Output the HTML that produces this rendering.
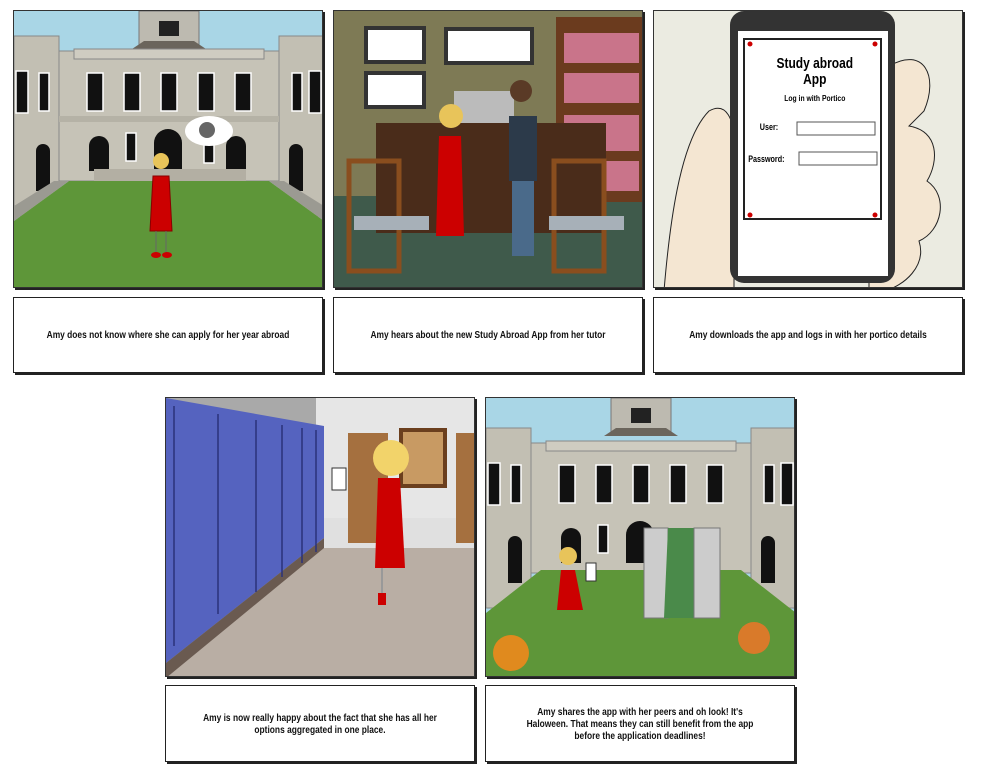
<!DOCTYPE html>
<html><head><meta charset="utf-8"><style>
body{margin:0;width:988px;height:778px;background:#fff;position:relative;overflow:hidden;font-family:"Liberation Sans",sans-serif}
.p{position:absolute;width:310px;height:278px;overflow:hidden;box-shadow:2px 2px 0 #222;border:1px solid #333;box-sizing:border-box}
.c{position:absolute;width:310px;height:76px;border:1.5px solid #222;box-shadow:2px 2px 0 #222;box-sizing:border-box;background:#fff;display:flex;align-items:center;justify-content:center;text-align:center;overflow:hidden}
.c span{display:inline-block;flex:none;width:340px;transform:scaleX(.8);font-weight:bold;font-size:10.5px;line-height:12px;color:#111}
.c span.n{width:300px}
svg{display:block}
</style></head><body>

<div class="p" style="left:13px;top:10px">
<svg width="310" height="278" viewBox="0 0 310 278">
<rect width="310" height="278" fill="#a9d6e6"/>
<rect x="125" y="0" width="60" height="35" fill="#bdbab0" stroke="#777"/>
<rect x="145" y="10" width="20" height="15" fill="#222"/>
<polygon points="118,38 192,38 180,30 130,30" fill="#6b655c"/>
<rect x="0" y="25" width="45" height="180" fill="#c2bfb3" stroke="#888"/>
<rect x="265" y="25" width="45" height="180" fill="#c2bfb3" stroke="#888"/>
<rect x="45" y="40" width="220" height="130" fill="#c6c3b7" stroke="#888"/>
<rect x="60" y="38" width="190" height="10" fill="#cfccc1" stroke="#888"/>
<rect x="45" y="105" width="220" height="6" fill="#b5b2a6"/>
<g fill="#111" stroke="#fff" stroke-width="1.5">
<rect x="73" y="62" width="16" height="38"/><rect x="110" y="62" width="16" height="38"/><rect x="147" y="62" width="16" height="38"/><rect x="184" y="62" width="16" height="38"/><rect x="221" y="62" width="16" height="38"/>
<rect x="2" y="60" width="12" height="42"/><rect x="25" y="62" width="10" height="38"/><rect x="278" y="62" width="10" height="38"/><rect x="295" y="60" width="12" height="42"/>
<rect x="112" y="122" width="10" height="28"/><rect x="190" y="130" width="10" height="22"/>
</g>
<g fill="#111"><path d="M75 160v-25a10 10 0 0 1 20 0v25z"/><path d="M140 160v-28a14 14 0 0 1 28 0v28z"/><path d="M212 160v-25a10 10 0 0 1 20 0v25z"/><path d="M22 180v-40a7 7 0 0 1 14 0v40z"/><path d="M275 180v-40a7 7 0 0 1 14 0v40z"/></g>
<rect x="80" y="158" width="152" height="14" fill="#b3afa3"/>
<polygon points="0,210 55,170 255,170 310,210 310,278 0,278" fill="#5e9639"/>
<polygon points="0,210 55,170 40,170 0,195" fill="#9b9a92"/>
<polygon points="310,210 255,170 270,170 310,195" fill="#9b9a92"/>
<ellipse cx="195" cy="120" rx="24" ry="15" fill="#fff"/><circle cx="193" cy="119" r="8" fill="#666"/>
<circle cx="147" cy="150" r="8" fill="#e8c45a"/>
<path d="M139 165h16l3 55h-22z" fill="#c00" stroke="#800"/>
<path d="M142 220v22M152 220v22" stroke="#666"/>
<ellipse cx="142" cy="244" rx="5" ry="3" fill="#c00"/><ellipse cx="153" cy="244" rx="5" ry="3" fill="#c00"/>
</svg></div>

<div class="p" style="left:333px;top:10px">
<svg width="310" height="278" viewBox="0 0 310 278">
<rect width="310" height="278" fill="#7e7a55"/>
<rect x="0" y="185" width="310" height="93" fill="#3f5a4b"/>
<rect x="32" y="17" width="58" height="34" fill="#fff" stroke="#333" stroke-width="4"/>
<rect x="32" y="62" width="58" height="34" fill="#fff" stroke="#333" stroke-width="4"/>
<rect x="112" y="18" width="86" height="34" fill="#fff" stroke="#333" stroke-width="4"/>
<rect x="222" y="6" width="88" height="185" fill="#6b3b1e"/>
<g fill="#c9748a"><rect x="230" y="22" width="75" height="30"/><rect x="230" y="62" width="75" height="30"/><rect x="230" y="104" width="75" height="36"/><rect x="230" y="150" width="75" height="30"/></g>
<rect x="42" y="112" width="230" height="110" fill="#4a2c1a"/>
<rect x="120" y="80" width="60" height="32" fill="#bbb"/>
<rect x="15" y="150" width="50" height="110" fill="none" stroke="#8a4e1e" stroke-width="5"/>
<rect x="220" y="150" width="50" height="110" fill="none" stroke="#8a4e1e" stroke-width="5"/>
<rect x="20" y="205" width="75" height="14" fill="#a7b0b8"/><rect x="215" y="205" width="75" height="14" fill="#a7b0b8"/>
<circle cx="117" cy="105" r="12" fill="#e8c45a"/>
<path d="M105 125h22l3 100h-28z" fill="#c00"/>
<circle cx="187" cy="80" r="11" fill="#5a3a26"/>
<path d="M175 105h28v65h-28z" fill="#2c3a4a"/><path d="M178 170h22v75h-22z" fill="#4a6a8a"/>
</svg></div>

<div class="p" style="left:653px;top:10px">
<svg width="310" height="278" viewBox="0 0 310 278">
<rect width="310" height="278" fill="#ebebe1"/>
<path d="M55 100c18-10 25 10 25 30v150h-70c5-60 15-150 45-180z" fill="#f4e6d2" stroke="#222"/>
<path d="M235 55c35-20 50 10 35 45l-15 15c30 5 30 35 18 55 22 15 15 50-8 60 8 25-15 45-35 50h-15v-225z" fill="#f4e6d2" stroke="#222"/>
<rect x="76" y="0" width="165" height="272" rx="14" fill="#333"/>
<rect x="84" y="20" width="150" height="245" fill="#fff"/>
<rect x="90" y="28" width="137" height="180" fill="#fff" stroke="#222" stroke-width="2"/>
<g fill="#c00"><circle cx="96" cy="33" r="2.5"/><circle cx="221" cy="33" r="2.5"/><circle cx="96" cy="204" r="2.5"/><circle cx="221" cy="204" r="2.5"/></g>
<g font-family="Liberation Sans,sans-serif" font-weight="bold">
<text x="161" y="57" text-anchor="middle" font-size="15" transform="translate(32 0) scale(.8 1)">Study abroad</text>
<text x="161" y="73" text-anchor="middle" font-size="15" transform="translate(32 0) scale(.8 1)">App</text>
<text x="161" y="90" text-anchor="middle" font-size="8.5" transform="translate(32 0) scale(.8 1)">Log in with Portico</text>
<text x="106" y="119" font-size="9" transform="translate(21 0) scale(.8 1)">User:</text>
<text x="94" y="151" font-size="9" transform="translate(19 0) scale(.8 1)">Password:</text>
</g>
<rect x="143" y="111" width="78" height="13" fill="#fff" stroke="#555"/>
<rect x="145" y="141" width="78" height="13" fill="#fff" stroke="#555"/>
</svg></div>

<div class="c" style="left:13px;top:297px"><span>Amy does not know where she can apply for her year abroad</span></div>
<div class="c" style="left:333px;top:297px"><span>Amy hears about the new Study Abroad App from her tutor</span></div>
<div class="c" style="left:653px;top:297px"><span>Amy downloads the app and logs in with her portico details</span></div>

<div class="p" style="left:165px;top:397px;height:280px">
<svg width="310" height="280" viewBox="0 0 310 280">
<rect width="310" height="280" fill="#e6e6e6"/>
<polygon points="0,0 150,0 150,160 0,280" fill="#a9a9a9"/>
<polygon points="0,280 150,150 310,150 310,280" fill="#b9aea4"/>
<rect x="150" y="120" width="160" height="30" fill="#e0e0e0"/>
<rect x="182" y="35" width="40" height="110" fill="#a5703f"/><rect x="290" y="35" width="20" height="110" fill="#a5703f"/>
<rect x="235" y="32" width="44" height="56" fill="#c89a63" stroke="#6b3f1e" stroke-width="4"/>
<polygon points="0,0 158,28 158,140 0,265" fill="#5563bf"/>
<polygon points="0,265 158,140 158,150 0,280" fill="#6a5a50"/>
<g fill="none" stroke="#2b337a" stroke-width="1.5"><path d="M8 8v240M52 16v200M90 22v172M116 27v152M136 30v135M150 32v122"/></g>
<circle cx="225" cy="60" r="18" fill="#f2d36a"/>
<path d="M212 80h22l5 90h-30z" fill="#c00"/><rect x="166" y="70" width="14" height="22" fill="#fff" stroke="#333"/>
<path d="M216 170v30" stroke="#999" stroke-width="2"/><rect x="212" y="195" width="8" height="12" fill="#c00"/>
</svg></div>

<div class="p" style="left:485px;top:397px;height:280px">
<svg width="310" height="280" viewBox="0 0 310 280">
<rect width="310" height="280" fill="#a9d6e6"/>
<rect x="125" y="0" width="60" height="35" fill="#bdbab0" stroke="#777"/>
<rect x="145" y="10" width="20" height="15" fill="#222"/>
<polygon points="118,38 192,38 180,30 130,30" fill="#6b655c"/>
<rect x="0" y="30" width="45" height="180" fill="#c2bfb3" stroke="#888"/>
<rect x="265" y="30" width="45" height="180" fill="#c2bfb3" stroke="#888"/>
<rect x="45" y="45" width="220" height="130" fill="#c6c3b7" stroke="#888"/>
<rect x="60" y="43" width="190" height="10" fill="#cfccc1" stroke="#888"/>
<g fill="#111" stroke="#fff" stroke-width="1.5">
<rect x="73" y="67" width="16" height="38"/><rect x="110" y="67" width="16" height="38"/><rect x="147" y="67" width="16" height="38"/><rect x="184" y="67" width="16" height="38"/><rect x="221" y="67" width="16" height="38"/>
<rect x="2" y="65" width="12" height="42"/><rect x="25" y="67" width="10" height="38"/><rect x="278" y="67" width="10" height="38"/><rect x="295" y="65" width="12" height="42"/>
<rect x="112" y="127" width="10" height="28"/>
</g>
<g fill="#111"><path d="M75 165v-25a10 10 0 0 1 20 0v25z"/><path d="M140 165v-28a14 14 0 0 1 28 0v28z"/><path d="M212 165v-25a10 10 0 0 1 20 0v25z"/><path d="M22 185v-40a7 7 0 0 1 14 0v40z"/><path d="M275 185v-40a7 7 0 0 1 14 0v40z"/></g>
<polygon points="0,215 55,172 255,172 310,215 310,280 0,280" fill="#5e9639"/>
<circle cx="82" cy="158" r="9" fill="#e8c45a"/><path d="M75 172h14l8 40h-26z" fill="#c00"/>
<rect x="100" y="165" width="10" height="18" fill="#fff" stroke="#333"/>
<rect x="158" y="130" width="24" height="90" fill="#ccc" stroke="#777"/>
<path d="M182 130h26l4 90h-34z" fill="#4a8a4a"/>
<rect x="208" y="130" width="26" height="90" fill="#ccc" stroke="#777"/>
<circle cx="25" cy="255" r="18" fill="#e08a1e"/>
<circle cx="268" cy="240" r="16" fill="#d97a2a"/>
</svg></div>

<div class="c" style="left:165px;top:685px;height:77px"><span class="n">Amy is now really happy about the fact that she has all her options aggregated in one place.</span></div>
<div class="c" style="left:485px;top:685px;height:77px"><span class="n">Amy shares the app with her peers and oh look! It's Haloween. That means they can still benefit from the app before the application deadlines!</span></div>
</body></html>
